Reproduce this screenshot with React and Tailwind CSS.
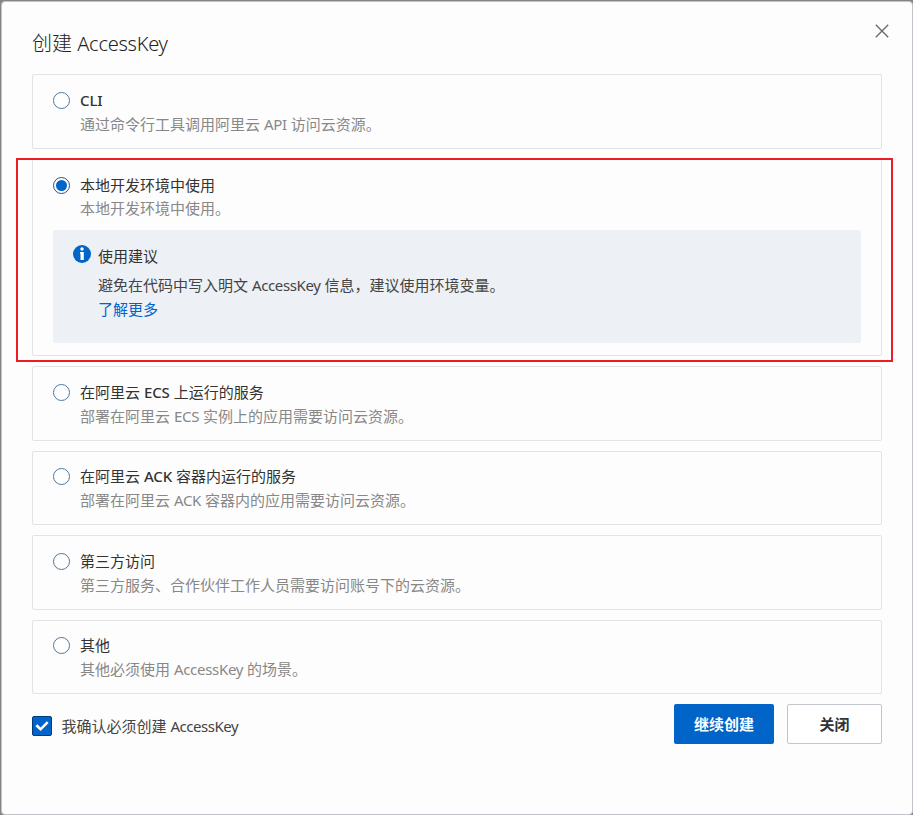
const OPTIONS = [
  { id: 'cli', title: 'CLI', desc: '通过命令行工具调用阿里云 API 访问云资源。' },
  { id: 'local', title: '本地开发环境中使用', desc: '本地开发环境中使用。' },
  { id: 'ecs', title: '在阿里云 ECS 上运行的服务', desc: '部署在阿里云 ECS 实例上的应用需要访问云资源。' },
  { id: 'ack', title: '在阿里云 ACK 容器内运行的服务', desc: '部署在阿里云 ACK 容器内的应用需要访问云资源。' },
  { id: 'third', title: '第三方访问', desc: '第三方服务、合作伙伴工作人员需要访问账号下的云资源。' },
  { id: 'other', title: '其他', desc: '其他必须使用 AccessKey 的场景。' },
]

// Latin words get a slightly tighter setting than the Chinese around them
function Mixed({ text, latin = 'tracking-[-0.35px]' }) {
  return text.split(/([A-Za-z]+)/).map((part, i) =>
    i % 2 ? <span key={i} className={latin}>{part}</span> : part
  )
}

function Radio({ checked }) {
  return (
    <span className={`flex size-[17px] shrink-0 items-center justify-center rounded-full border bg-white ${checked ? 'mt-[4.5px] border-[#1d568f]' : 'mt-[3.75px] border-[#4f779f]'}`}>
      {checked && <span className="size-[11px] rounded-full bg-[#0064c8]" />}
    </span>
  )
}

function Advice() {
  return (
    <div className="mt-[9.25px] flex h-[113px] gap-[7px] rounded-[2px] bg-[#edf1f6] pl-5 pt-[14px]">
      <svg className="mt-px size-[18px] shrink-0" viewBox="0 0 18 18">
        <circle cx="9" cy="9" r="9" fill="#0064c8" />
        <circle cx="9" cy="4" r="1.7" fill="#fff" />
        <path d="M7 7h3.800v8H7.500V8.500H7z" fill="#fff" />
      </svg>
      <div>
        <p className="leading-6 text-[#333]">使用建议</p>
        <p className="mt-[5px] leading-6 text-[#444]">
          <Mixed text="避免在代码中写入明文 AccessKey 信息，建议使用环境变量。" />
        </p>
        <a className="block leading-6 text-[#0064c8]" href="#">了解更多</a>
      </div>
    </div>
  )
}

function OptionCard({ option, checked }) {
  return (
    <div className={`rounded-[2px] border border-[#e2e3e6] px-5 pt-[12.75px] ${checked ? 'h-[197.5px]' : 'h-[74.5px]'}`}>
      <div className="flex gap-[10px]">
        <Radio checked={checked} />
        <div>
          <p className={checked ? 'pt-px leading-6 text-[#333]' : 'leading-6 text-[#333]'}>
            <Mixed text={option.title} latin="font-medium tracking-[-0.1px]" />
          </p>
          <p className={checked ? '-mt-px leading-6 text-[#888]' : 'leading-6 text-[#888]'}>
            <Mixed text={option.desc} latin="tracking-[-0.3px]" />
          </p>
        </div>
      </div>
      {checked && <Advice />}
    </div>
  )
}

export default function App() {
  return (
    <div className="h-[815px] w-[913px] bg-[#858585] pl-px pt-px font-['Noto_Sans','Noto_Sans_CJK_SC',sans-serif] text-[15px]">
      <div className="relative h-[814px] rounded-[4px] border border-[#bfc3ca] bg-[#fdfdfd] px-[30px] pt-[27px]">
        <h1 className="h-[45px] text-xl leading-[30px] font-light text-[#222]">
          <Mixed text="创建 AccessKey" latin="tracking-[-0.25px]" />
        </h1>
        <svg className="absolute right-[23px] top-[22px] size-[14px]" viewBox="0 0 14 14" fill="none" stroke="#666" strokeWidth="1.3">
          <path d="M.8.800 13.200 13.200M13.200.800.8 13.200" />
        </svg>

        <div className="flex flex-col gap-[10px]">
          {OPTIONS.map((option) => (
            <OptionCard key={option.id} option={option} checked={option.id === 'local'} />
          ))}
        </div>

        <div className="mt-[10px] flex h-10 items-center">
          <span className="mt-1 flex size-5 items-center justify-center rounded-[2px] border border-[#003b7a] bg-[#0064c8]">
            <svg className="size-[14px]" viewBox="0 0 14 14" fill="none" stroke="#fff" strokeWidth="2.6">
              <path d="M1.300 6.200 5.600 10.300 12.700 3.200" />
            </svg>
          </span>
          <span className="ml-[9.5px] mt-[3px] leading-6 text-[#444]">
            <Mixed text="我确认必须创建 AccessKey" latin="tracking-[-0.45px]" />
          </span>
          <button className="ml-auto h-10 w-[100px] rounded-[2px] bg-[#0064c8] font-bold text-white">继续创建</button>
          <button className="ml-[13px] h-10 w-[95px] rounded-[2px] border border-[#c0c6cc] bg-white font-bold text-[#333]">关闭</button>
        </div>

        {/* highlight around the recommended option */}
        <div className="pointer-events-none absolute left-[14px] top-[156px] h-[204px] w-[877px] border-2 border-[#ed1c24]" />
      </div>
    </div>
  )
}
